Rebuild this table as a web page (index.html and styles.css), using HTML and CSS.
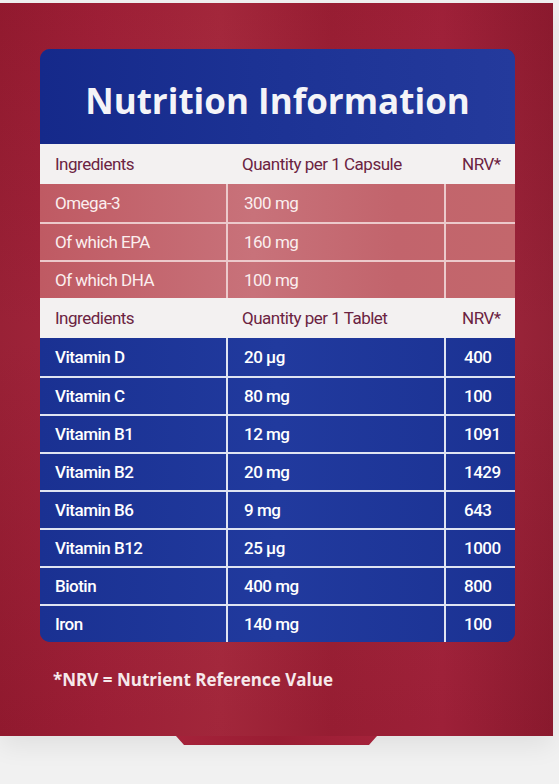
FILE: index.html
```html
<!DOCTYPE html>
<html lang="en">
<head>
  <meta charset="UTF-8">
  <meta name="viewport" content="width=device-width, initial-scale=1.0">
  <title>Nutrition Information</title>
  <link rel="stylesheet" href="styles.css">
</head>
<body>
  <div class="pack">
    <div class="panel">
      <div class="card">
        <h1 class="card-title">Nutrition Information</h1>

        <div class="row head">
          <div class="cell">Ingredients</div>
          <div class="cell">Quantity per 1 Capsule</div>
          <div class="cell">NRV*</div>
        </div>
        <div class="row oil">
          <div class="cell">Omega-3</div>
          <div class="cell">300 mg</div>
          <div class="cell"></div>
        </div>
        <div class="row oil">
          <div class="cell">Of which EPA</div>
          <div class="cell">160 mg</div>
          <div class="cell"></div>
        </div>
        <div class="row oil">
          <div class="cell">Of which DHA</div>
          <div class="cell">100 mg</div>
          <div class="cell"></div>
        </div>

        <div class="row head">
          <div class="cell">Ingredients</div>
          <div class="cell">Quantity per 1 Tablet</div>
          <div class="cell">NRV*</div>
        </div>
        <div class="row vit first">
          <div class="cell">Vitamin D</div>
          <div class="cell">20 µg</div>
          <div class="cell">400</div>
        </div>
        <div class="row vit">
          <div class="cell">Vitamin C</div>
          <div class="cell">80 mg</div>
          <div class="cell">100</div>
        </div>
        <div class="row vit">
          <div class="cell">Vitamin B1</div>
          <div class="cell">12 mg</div>
          <div class="cell">1091</div>
        </div>
        <div class="row vit">
          <div class="cell">Vitamin B2</div>
          <div class="cell">20 mg</div>
          <div class="cell">1429</div>
        </div>
        <div class="row vit">
          <div class="cell">Vitamin B6</div>
          <div class="cell">9 mg</div>
          <div class="cell">643</div>
        </div>
        <div class="row vit">
          <div class="cell">Vitamin B12</div>
          <div class="cell">25 µg</div>
          <div class="cell">1000</div>
        </div>
        <div class="row vit">
          <div class="cell">Biotin</div>
          <div class="cell">400 mg</div>
          <div class="cell">800</div>
        </div>
        <div class="row vit">
          <div class="cell">Iron</div>
          <div class="cell">140 mg</div>
          <div class="cell">100</div>
        </div>
      </div>

      <p class="note">*NRV = Nutrient Reference Value</p>
    </div>
    <div class="tab"></div>
  </div>
</body>
</html>
```

FILE: styles.css
```css
* {
  margin: 0;
  padding: 0;
  box-sizing: border-box;
}

body {
  background: #f1f1f1;
  font-family: Roboto, "Liberation Sans", sans-serif;
  width: 559px;
  height: 784px;
  overflow: hidden;
}

.pack {
  padding-top: 3px;
}

.panel {
  width: 553px;
  height: 733px;
  padding: 46px 0 0 40px;
  background:
    linear-gradient(180deg, rgba(0,0,0,0.03) 0%, rgba(255,255,255,0.03) 45%, rgba(0,0,0,0.04) 100%),
    linear-gradient(90deg, #961a30 0%, #a11f37 18%, #a8283d 40%, #9c1e34 60%, #a3213a 80%, #8f1a2f 100%);
  box-shadow: 0 10px 24px rgba(0,0,0,0.07);
}

.card {
  width: 475px;
  border-radius: 10px;
  overflow: hidden;
  background: #1b3193;
}

.card-title {
  height: 95px;
  padding-top: 28px;
  text-align: center;
  font-family: "Open Sans", sans-serif;
  font-size: 35px;
  font-weight: 700;
  line-height: 48px;
  color: #f4f4f8;
  background: linear-gradient(90deg, #15298a 0%, #1c3294 45%, #243a9c 100%);
}

.row {
  display: grid;
  grid-template-columns: 186px 218px 1fr;
  height: 38px;
  font-size: 17px;
  letter-spacing: -0.5px;
}

.cell {
  display: flex;
  align-items: center;
  padding-left: 15px;
}

.cell + .cell {
  padding-left: 16px;
}

.cell:last-child {
  padding-left: 18px;
}

.row.head {
  height: 40px;
  background: #f3f1f1;
  color: #6b2341;
}

.row.oil {
  color: #fbeeee;
  background: linear-gradient(90deg, #bf5a63 0%, #c8727a 45%, #c2646c 75%, #c3676c 100%);
}

.row.oil + .row.oil {
  border-top: 2px solid #ecc9cb;
}

.row.oil .cell + .cell {
  border-left: 2px solid #ecc9cb;
}

.row.vit {
  color: #ffffff;
  font-weight: 500;
  background: linear-gradient(90deg, #1a3192 0%, #213a9e 50%, #1b3293 100%);
  border-top: 2px solid #dfe4f2;
}

.row.vit.first {
  border-top: 0;
}

.row.vit .cell + .cell {
  border-left: 2px solid #dfe4f2;
}

.note {
  margin: 26px 0 0 13px;
  font-family: "Open Sans", sans-serif;
  font-size: 17px;
  font-weight: 700;
  color: #f6e9eb;
}

.tab {
  width: 201px;
  height: 9px;
  margin-left: 176px;
  background: linear-gradient(90deg, #a5223a 0%, #9a1d33 50%, #a4223a 100%);
  clip-path: polygon(0 0, 100% 0, 96% 100%, 4% 100%);
}
```
